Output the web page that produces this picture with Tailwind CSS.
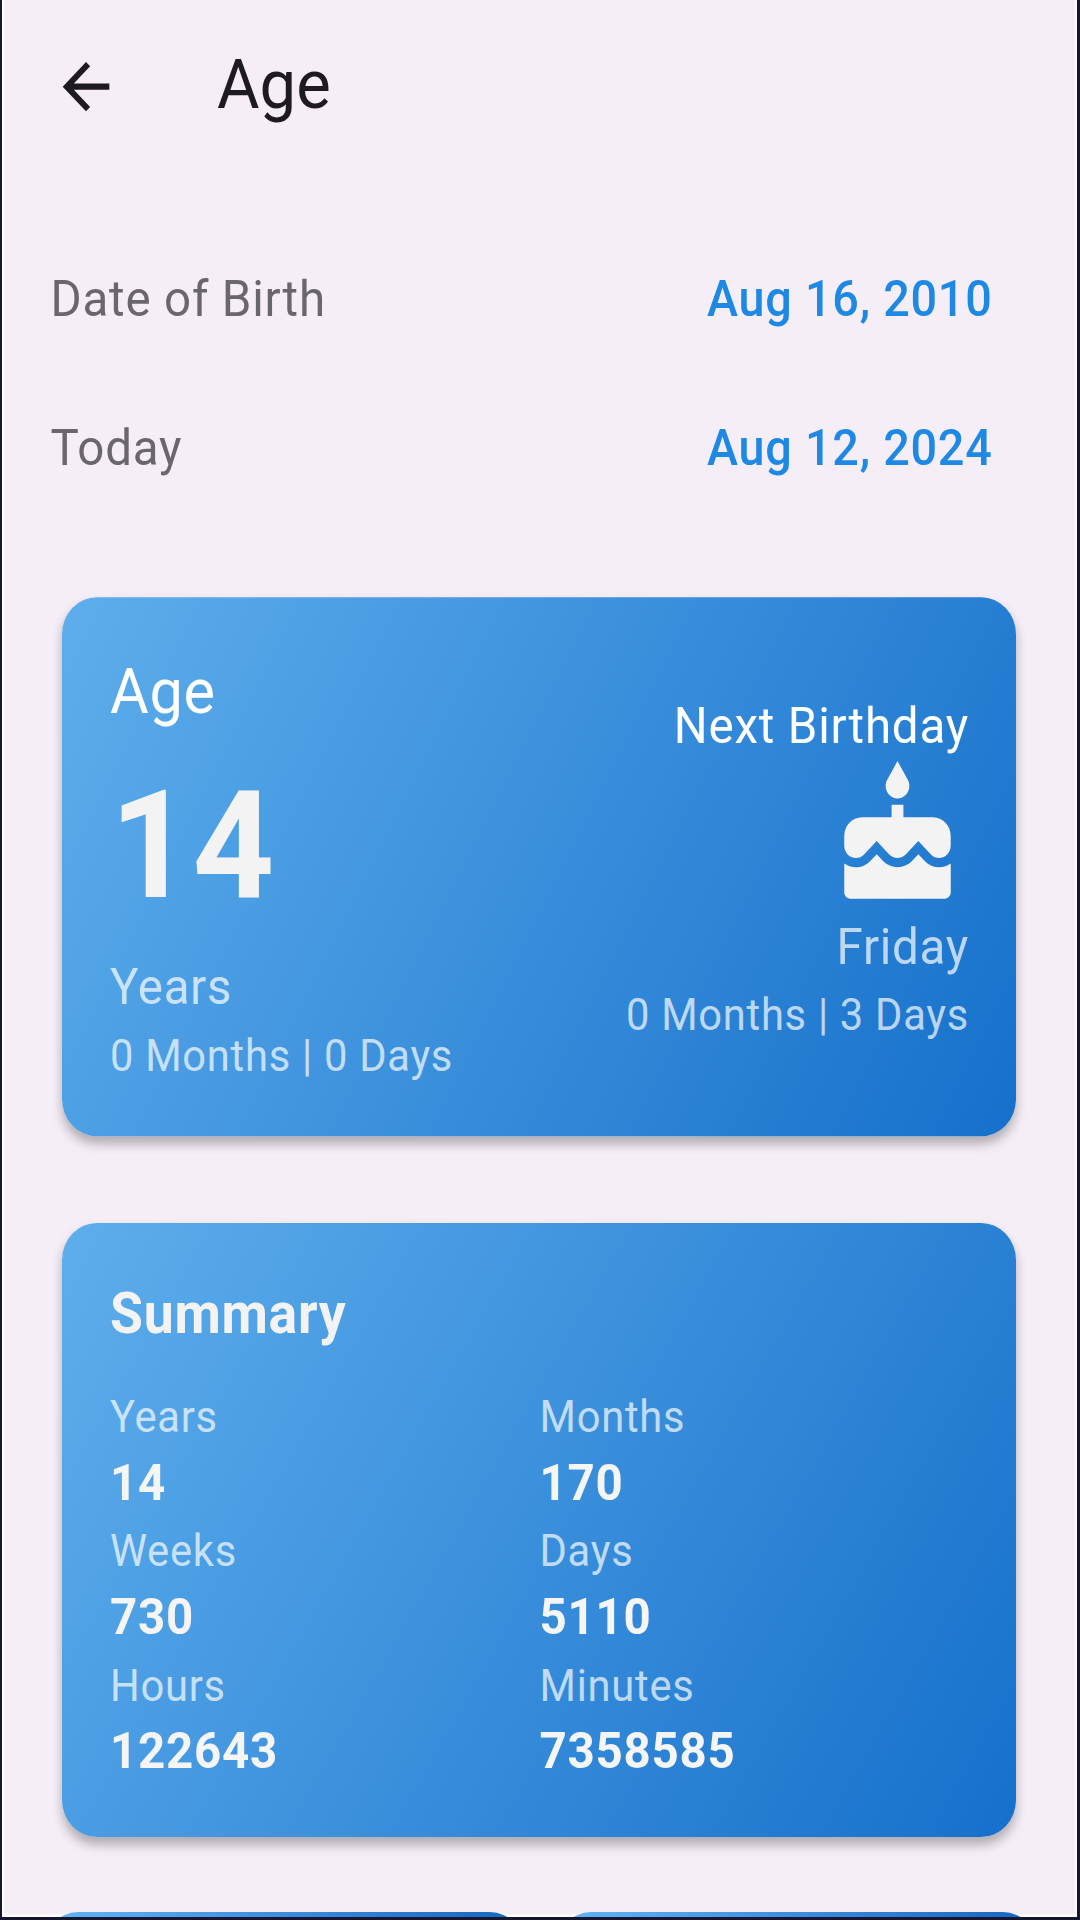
<!DOCTYPE html>
<html lang="en">
<head>
    <meta charset="UTF-8">
    <meta name="viewport" content="width=device-width, initial-scale=1.0">
    <title>Age</title>
    <script src="https://cdn.jsdelivr.net/npm/@tailwindcss/browser@4"></script>
</head>
<body class="h-[1920px] overflow-hidden bg-[#15162f]">
    <div class="h-[1917px] ml-[2px] mr-[3px] border-x-2 border-white bg-[linear-gradient(#f5eef6_1914px,#fff_1915px)] overflow-hidden">
        <div class="w-[1071px] h-[1813px] origin-top-left scale-y-[1.057] font-[Roboto,sans-serif]">
            <!-- App bar -->
            <header class="flex items-center h-[163px] pl-[46.5px]">
                <svg class="w-[70px] h-[70px]" viewBox="0 0 24 24" fill="#1d1b20">
                    <path d="M20 11H7.83l5.59-5.59L12 4l-8 8 8 8 1.41-1.41L7.83 13H20v-2z"/>
                </svg>
                <h1 class="ml-[96.5px] pb-px text-[65.2px] leading-none text-[#1d1b20]">Age</h1>
            </header>

            <!-- Dates -->
            <div class="pt-[49.4px] pl-[46.5px] pr-[82.5px] text-[47.5px] tracking-[0.8px]">
                <div class="flex justify-between items-center h-[141.2px]">
                    <span class="pt-px text-[#6a676c]">Date of Birth</span>
                    <span class="text-[46.8px] tracking-[0.73px] font-medium text-[#1e88e5]">Aug 16, 2010</span>
                </div>
                <div class="flex justify-between items-center h-[141.2px]">
                    <span class="pt-px text-[#6a676c]">Today</span>
                    <span class="text-[46.8px] tracking-[0.73px] font-medium text-[#1e88e5]">Aug 12, 2024</span>
                </div>
            </div>

            <!-- Age card -->
            <section class="flex justify-between w-[954px] h-[509.8px] mt-[70.4px] ml-[58px] pl-[48px] pr-[47px] rounded-[35px] bg-[linear-gradient(118deg,#5eaeec,#1670cb)] shadow-[0_7px_10px_rgba(0,0,0,0.28)] text-[#f3f3f3] tracking-[0.73px]">
                <div class="pt-[49px]">
                    <h2 class="text-[59.4px] leading-[83.5px] text-white">Age</h2>
                    <p class="text-[142.5px] leading-[206.3px] font-bold">14</p>
                    <p class="text-[47.5px] leading-[61.6px] text-white/70">Years</p>
                    <p class="text-[41.7px] leading-[65.6px] text-white/70">0 Months | 0 Days</p>
                </div>
                <div class="flex flex-col items-end pt-[89px]">
                    <h3 class="text-[47.5px] tracking-[0.8px] leading-[66px] text-white">Next Birthday</h3>
                    <svg class="w-[143px] h-[142px]" viewBox="0 0 24 24" fill="#f3f3f3">
                        <path d="M12 6c1.11 0 2-.9 2-2 0-.38-.1-.73-.29-1.03L12 0l-1.71 2.97c-.19.3-.29.65-.29 1.03 0 1.1.9 2 2 2zm4.6 9.99l-1.07-1.07-1.08 1.07c-1.3 1.3-3.58 1.31-4.89 0l-1.07-1.07-1.09 1.07C6.75 16.64 5.88 17 4.96 17c-.73 0-1.4-.23-1.96-.61V21c0 .55.45 1 1 1h16c.55 0 1-.45 1-1v-4.61c-.56.38-1.23.61-1.96.61-.92 0-1.79-.36-2.44-1.01zM18 9h-5V7h-2v2H6c-1.66 0-3 1.34-3 3v1.54c0 1.08.88 1.96 1.96 1.96.52 0 1.02-.2 1.38-.57l2.14-2.13 2.13 2.13c.74.74 2.03.74 2.77 0l2.14-2.13 2.13 2.13c.37.37.86.57 1.38.57 1.08 0 1.96-.88 1.96-1.96V12C21 10.34 19.66 9 18 9z"/>
                    </svg>
                    <p class="text-[47.5px] leading-[68.6px] text-white/70">Friday</p>
                    <p class="text-[41.7px] leading-[58.4px] text-white/70">0 Months | 3 Days</p>
                </div>
            </section>

            <!-- Summary card -->
            <section class="w-[954px] h-[580.6px] mt-[82px] ml-[58px] px-[48px] pt-[48px] rounded-[35px] bg-[linear-gradient(121deg,#5eaeec,#1670cb)] shadow-[0_7px_10px_rgba(0,0,0,0.28)] text-[#f3f3f3] tracking-[0.75px]">
                <h2 class="text-[53.5px] leading-[76px] font-bold">Summary</h2>
                <div class="grid grid-cols-2 gap-x-px mt-[27.7px] text-[41.7px] leading-[63.3px] text-white/70">
                    <div>
                        <p>Years</p>
                        <p class="text-[47.5px] leading-[63.7px] font-bold text-[#f5f5f5]">14</p>
                    </div>
                    <div>
                        <p>Months</p>
                        <p class="text-[47.5px] leading-[63.7px] font-bold text-[#f5f5f5]">170</p>
                    </div>
                    <div>
                        <p>Weeks</p>
                        <p class="text-[47.5px] leading-[63.7px] font-bold text-[#f5f5f5]">730</p>
                    </div>
                    <div>
                        <p>Days</p>
                        <p class="text-[47.5px] leading-[63.7px] font-bold text-[#f5f5f5]">5110</p>
                    </div>
                    <div>
                        <p>Hours</p>
                        <p class="text-[47.5px] leading-[63.7px] font-bold text-[#f5f5f5]">122643</p>
                    </div>
                    <div>
                        <p>Minutes</p>
                        <p class="text-[47.5px] leading-[63.7px] font-bold text-[#f5f5f5]">7358585</p>
                    </div>
                </div>
            </section>

            <!-- Next cards, cut off by the screen edge -->
            <div class="flex gap-[31px] mt-[71px] ml-[39px]">
                <div class="w-[482px] h-[200px] rounded-[35px] bg-[linear-gradient(90deg,#64b5f6,#1565c0)]"></div>
                <div class="w-[482px] h-[200px] rounded-[35px] bg-[linear-gradient(90deg,#64b5f6,#1565c0)]"></div>
            </div>
        </div>
    </div>
</body>
</html>
